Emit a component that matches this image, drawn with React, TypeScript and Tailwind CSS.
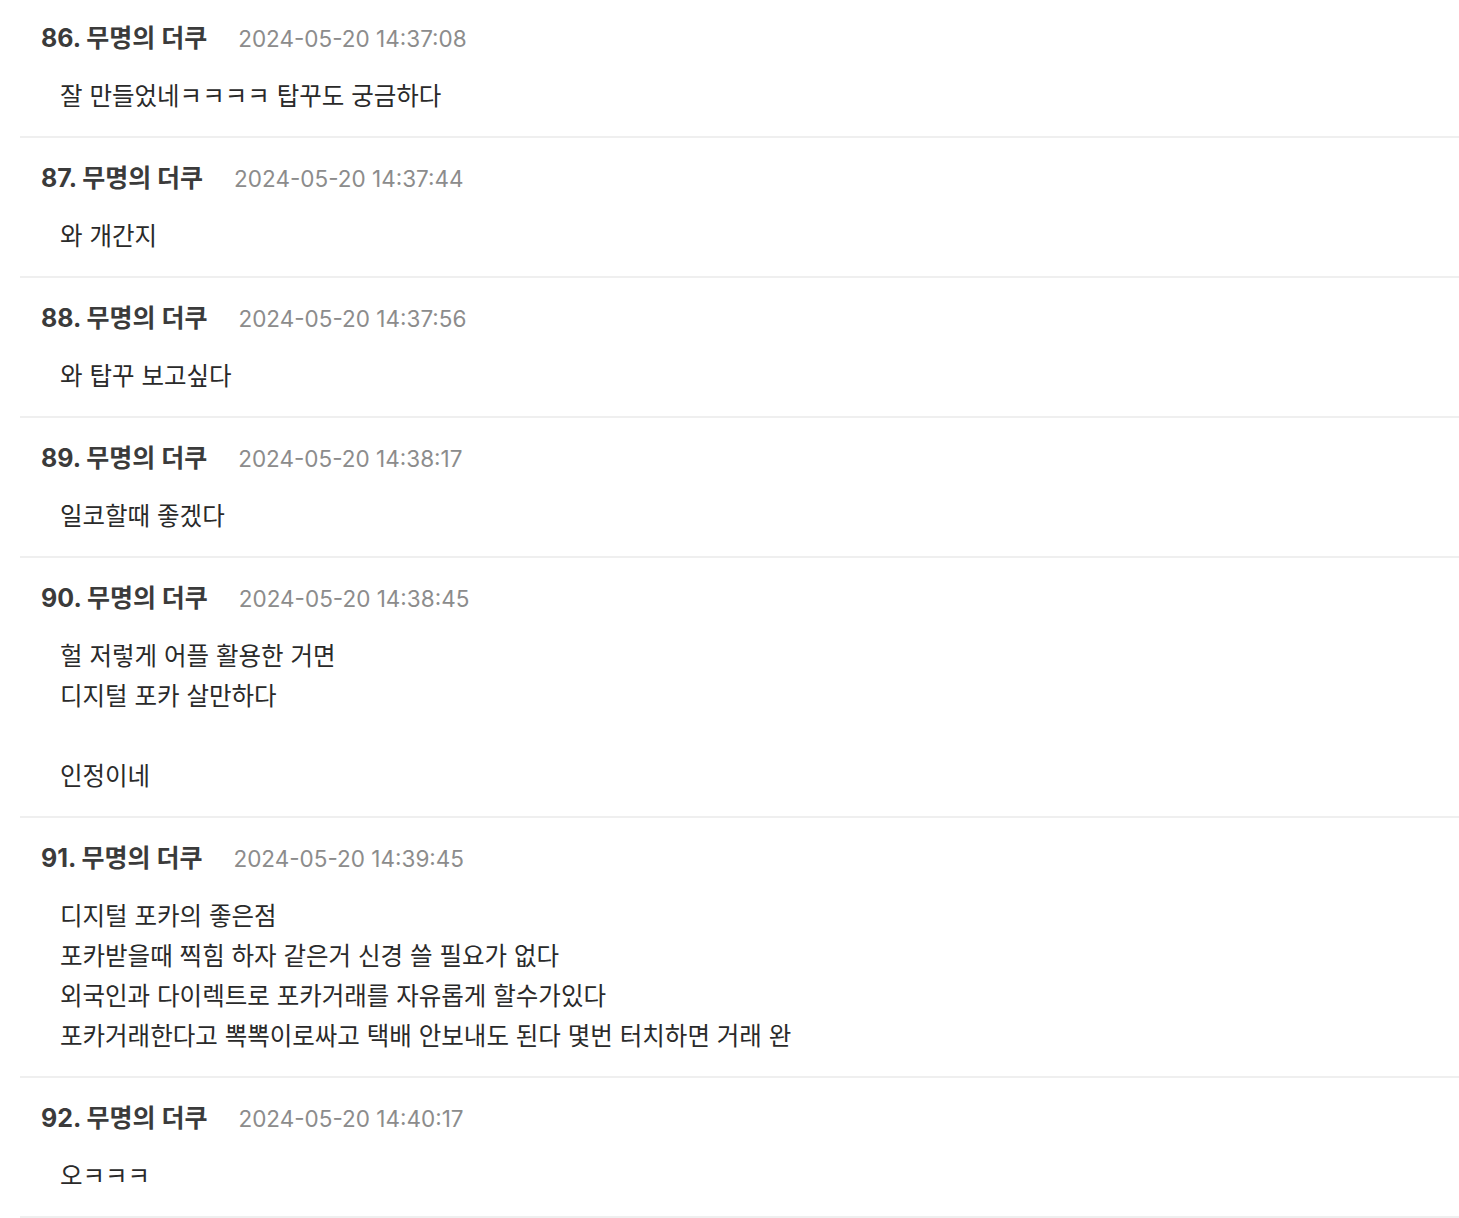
const comments = [
  { no: 86, date: '2024-05-20 14:37:08', lines: ['잘 만들었네ㅋㅋㅋㅋ 탑꾸도 궁금하다'] },
  { no: 87, date: '2024-05-20 14:37:44', lines: ['와 개간지'] },
  { no: 88, date: '2024-05-20 14:37:56', lines: ['와 탑꾸 보고싶다'] },
  { no: 89, date: '2024-05-20 14:38:17', lines: ['일코할때 좋겠다'] },
  { no: 90, date: '2024-05-20 14:38:45', lines: ['헐 저렇게 어플 활용한 거면', '디지털 포카 살만하다', '', '인정이네'] },
  {
    no: 91,
    date: '2024-05-20 14:39:45',
    lines: [
      '디지털 포카의 좋은점',
      '포카받을때 찍힘 하자 같은거 신경 쓸 필요가 없다',
      '외국인과 다이렉트로 포카거래를 자유롭게 할수가있다',
      '포카거래한다고 뽁뽁이로싸고 택배 안보내도 된다 몇번 터치하면 거래 완',
    ],
  },
  { no: 92, date: '2024-05-20 14:40:17', lines: ['오ㅋㅋㅋ'] },
];

export default function App() {
  return (
    <div className="min-h-screen bg-white pl-5 font-['Inter','Noto_Sans_CJK_KR',sans-serif]">
      <ul className="-mt-[2px]">
        {comments.map((c) => (
          <li key={c.no} className="border-b-2 border-[#efefef] pt-[27px] pb-[20px]">
            <div className="flex h-[28px] items-center pl-[21px]">
              <span className="text-[25px] font-bold text-[#3b3b3b]">
                {c.no}. 무명의 더쿠
              </span>
              <span className="ml-[31px] text-[22.5px] text-[#8c8c8c]">{c.date}</span>
            </div>
            <div className="mt-[23px] pl-10 text-[24.5px] leading-[40px] text-[#2a2a2a]">
              {c.lines.map((l, i) => (
                <p key={i} className="h-[40px]">
                  {l}
                </p>
              ))}
            </div>
          </li>
        ))}
      </ul>
    </div>
  );
}
